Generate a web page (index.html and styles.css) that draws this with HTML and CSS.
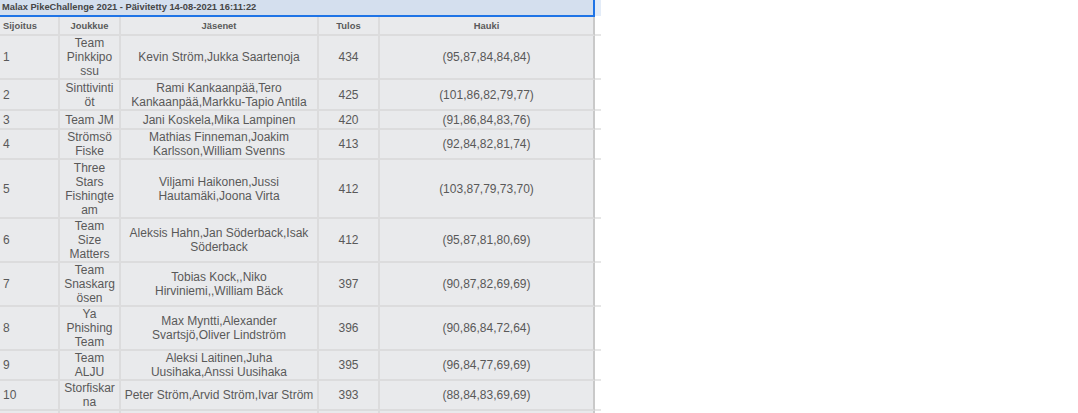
FILE: index.html
```html
<!DOCTYPE html>
<html lang="fi">
<head>
<meta charset="utf-8">
<title>Malax PikeChallenge 2021</title>
<link rel="stylesheet" href="styles.css">
</head>
<body>
<div class="sheet">
  <div class="titlebar">
    <div class="title">Malax PikeChallenge 2021 - Päivitetty 14-08-2021 16:11:22</div>
    <div class="title-tail"></div>
  </div>
  <table class="grid">
    <colgroup>
      <col class="w-rank">
      <col class="w-team">
      <col class="w-members">
      <col class="w-score">
      <col class="w-pike">
      <col class="w-tail">
    </colgroup>
    <thead>
      <tr>
        <th class="rank">Sijoitus</th>
        <th class="team">Joukkue</th>
        <th class="members">Jäsenet</th>
        <th class="score">Tulos</th>
        <th class="pike">Hauki</th>
        <th class="tail"></th>
      </tr>
    </thead>
    <tbody>
      <tr><td class="rank">1</td><td class="team">Team Pinkkipossu</td><td class="members">Kevin Ström,Jukka Saartenoja</td><td class="score">434</td><td class="pike">(95,87,84,84,84)</td><td class="tail"></td></tr>
      <tr class="tall"><td class="rank">2</td><td class="team">Sinttivintiöt</td><td class="members">Rami Kankaanpää,Tero Kankaanpää,Markku-Tapio Antila</td><td class="score">425</td><td class="pike">(101,86,82,79,77)</td><td class="tail"></td></tr>
      <tr><td class="rank">3</td><td class="team">Team JM</td><td class="members">Jani Koskela,Mika Lampinen</td><td class="score">420</td><td class="pike">(91,86,84,83,76)</td><td class="tail"></td></tr>
      <tr><td class="rank">4</td><td class="team">Strömsö Fiske</td><td class="members">Mathias Finneman,Joakim Karlsson,William Svenns</td><td class="score">413</td><td class="pike">(92,84,82,81,74)</td><td class="tail"></td></tr>
      <tr class="tall"><td class="rank">5</td><td class="team">Three Stars Fishingteam</td><td class="members">Viljami Haikonen,Jussi Hautamäki,Joona Virta</td><td class="score">412</td><td class="pike">(103,87,79,73,70)</td><td class="tail"></td></tr>
      <tr><td class="rank">6</td><td class="team">Team Size Matters</td><td class="members">Aleksis Hahn,Jan Söderback,Isak Söderback</td><td class="score">412</td><td class="pike">(95,87,81,80,69)</td><td class="tail"></td></tr>
      <tr><td class="rank">7</td><td class="team">Team Snaskargösen</td><td class="members">Tobias Kock,,Niko Hirviniemi,,William Bäck</td><td class="score">397</td><td class="pike">(90,87,82,69,69)</td><td class="tail"></td></tr>
      <tr><td class="rank">8</td><td class="team">Ya Phishing Team</td><td class="members">Max Myntti,Alexander Svartsjö,Oliver Lindström</td><td class="score">396</td><td class="pike">(90,86,84,72,64)</td><td class="tail"></td></tr>
      <tr><td class="rank">9</td><td class="team">Team ALJU</td><td class="members">Aleksi Laitinen,Juha Uusihaka,Anssi Uusihaka</td><td class="score">395</td><td class="pike">(96,84,77,69,69)</td><td class="tail"></td></tr>
      <tr><td class="rank">10</td><td class="team">Storfiskarna</td><td class="members">Peter Ström,Arvid Ström,Ivar Ström</td><td class="score">393</td><td class="pike">(88,84,83,69,69)</td><td class="tail"></td></tr>
      <tr class="more"><td class="rank">&nbsp;</td><td class="team">&nbsp;</td><td class="members">&nbsp;</td><td class="score">&nbsp;</td><td class="pike">&nbsp;</td><td class="tail"></td></tr>
    </tbody>
  </table>
</div>
</body>
</html>
```

FILE: styles.css
```css
* {
  box-sizing: border-box;
}

body {
  margin: 0;
  background: #ffffff;
  font-family: "Liberation Sans", Arial, sans-serif;
}

.sheet {
  width: 601px;
}

.titlebar {
  display: flex;
  height: 17px;
}

.title {
  width: 595px;
  height: 17px;
  padding-left: 2px;
  background: #d4dfee;
  border-right: 2px solid #1f74e6;
  border-bottom: 2px solid #1f74e6;
  color: #454545;
  font-size: 9.3px;
  font-weight: bold;
  line-height: 15px;
  white-space: nowrap;
  overflow: hidden;
}

.title-tail {
  width: 6px;
  height: 16px;
  background: #e3ecf8;
}

.grid {
  width: 601px;
  table-layout: fixed;
  border-collapse: separate;
  border-spacing: 0;
}

.w-rank { width: 60px; }
.w-team { width: 61px; }
.w-members { width: 198px; }
.w-score { width: 61px; }
.w-pike { width: 215px; }
.w-tail { width: 6px; }

.grid th,
.grid td {
  background: #e9eaec;
  border-right: 2px solid #dcdcdd;
  border-bottom: 2px solid #dcdcdd;
  padding: 0 3px;
  vertical-align: middle;
  text-align: center;
  color: #595959;
  overflow-wrap: break-word;
}

.grid th {
  height: 19px;
  font-size: 9.4px;
  font-weight: bold;
  line-height: 12px;
  color: #5a5a5a;
}

.grid td {
  height: 19px;
  font-size: 12px;
  line-height: 14px;
}

.grid .tall td {
  padding-top: 1px;
}

.grid .rank {
  text-align: left;
  padding-left: 3px;
}

.grid .team {
  padding-left: 4px;
  padding-right: 4px;
}

.grid .pike {
  border-right: 2px solid #c9c9c9;
}

.grid .tail {
  background: #ffffff;
  border-right: none;
  border-bottom: 2px solid #e6e6e6;
  padding: 0;
}

.grid .more td {
  height: 22px;
}
```
